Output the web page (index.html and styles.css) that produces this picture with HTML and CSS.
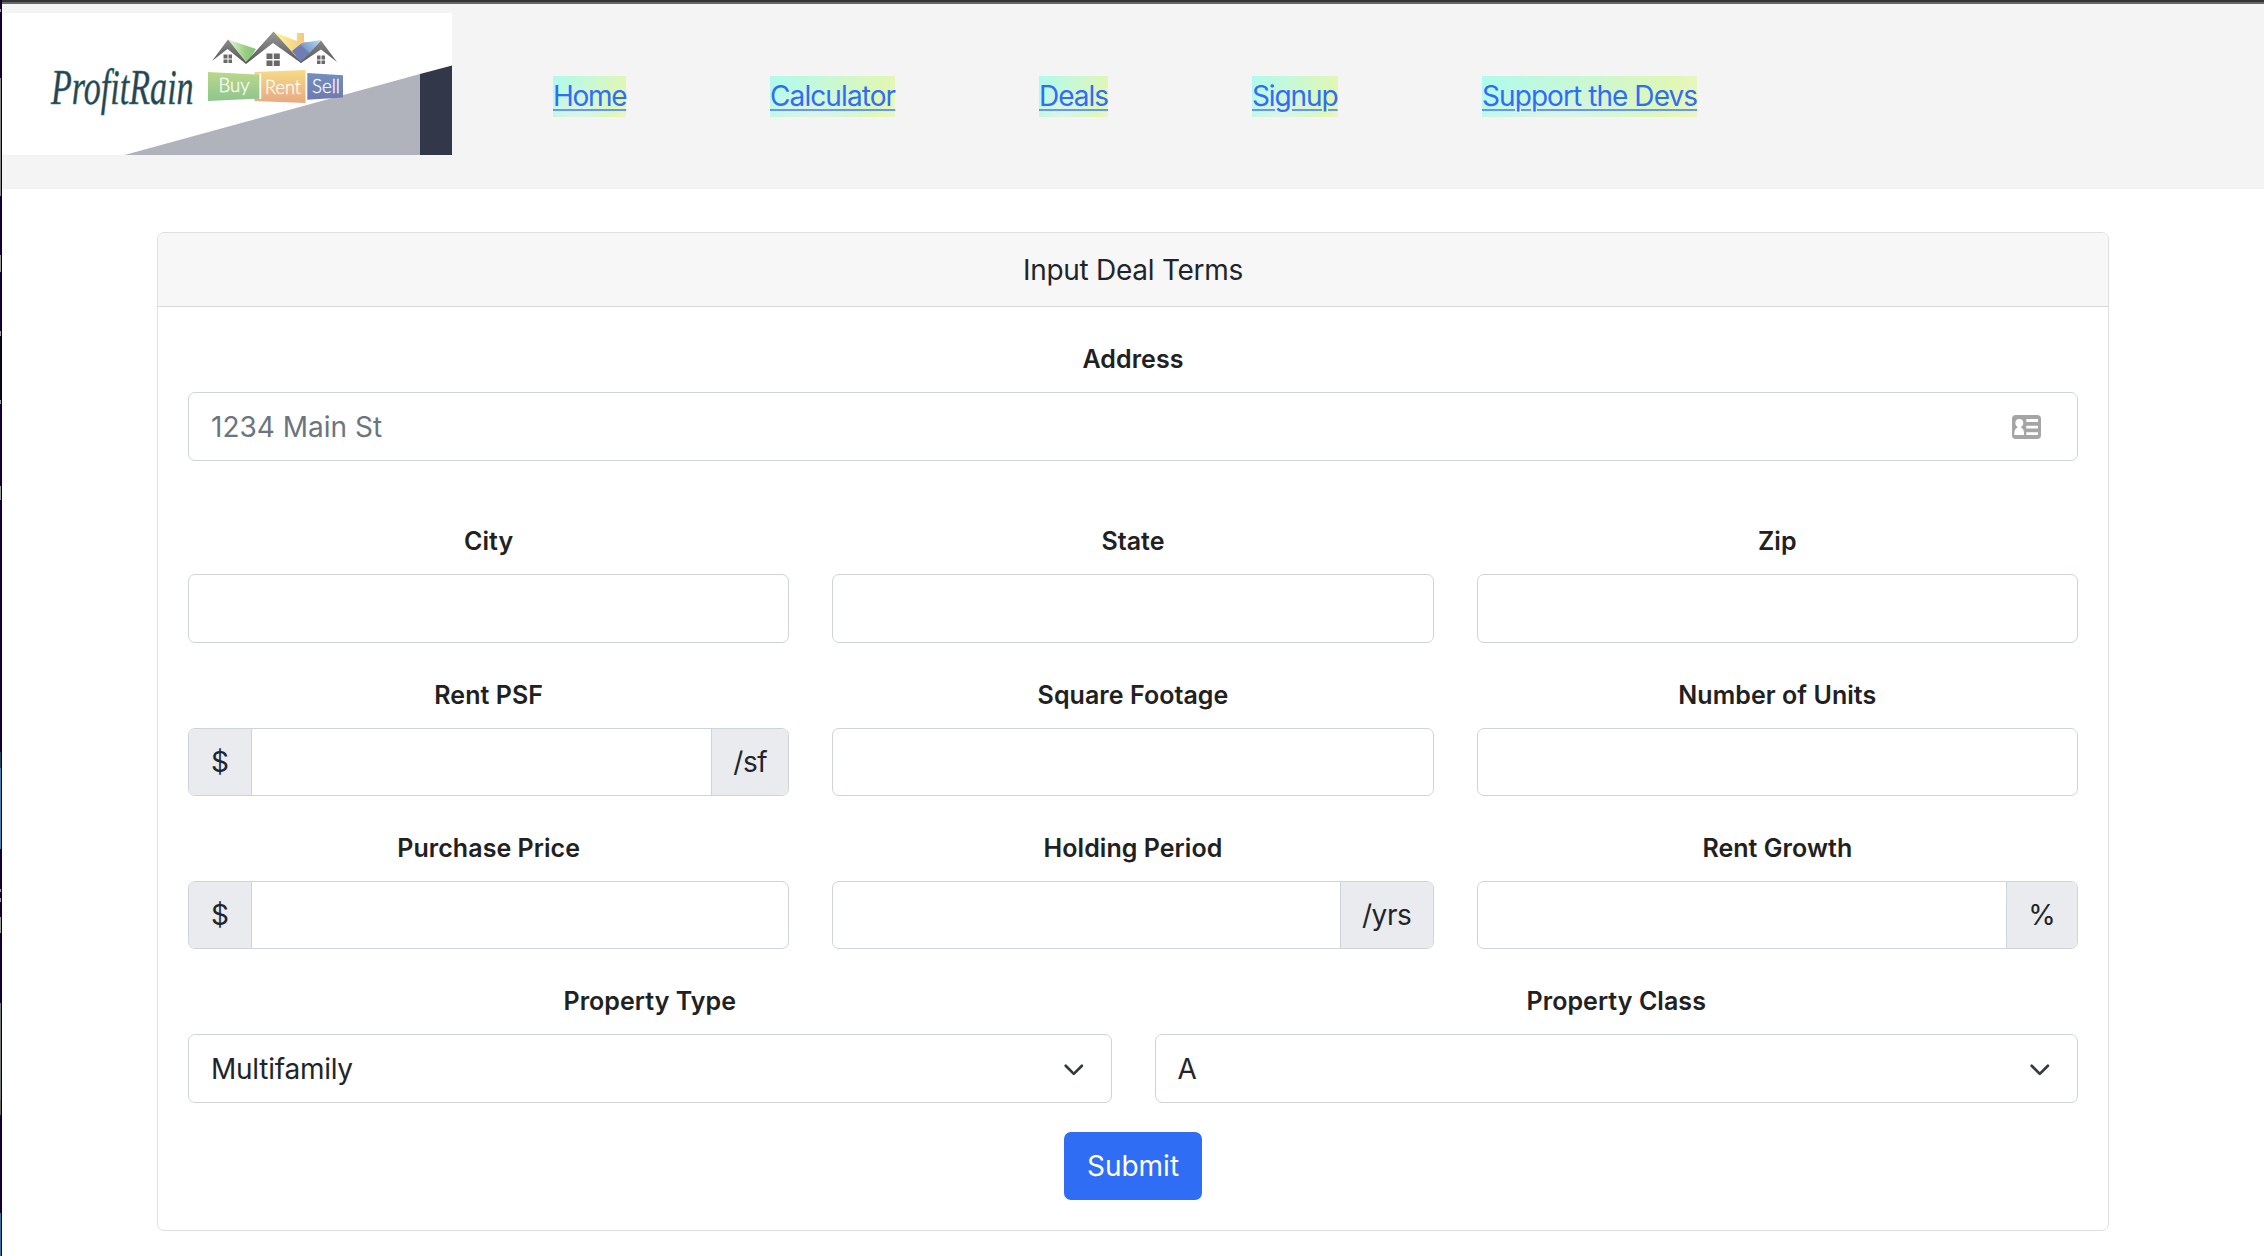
FILE: index.html
```html
<!DOCTYPE html>
<html lang="en">
<head>
<meta charset="utf-8">
<title>ProfitRain</title>
<link rel="stylesheet" href="styles.css">
</head>
<body>
<div class="window-edge"></div>
<div class="page">
<header class="site-header">
  <svg class="logo" viewBox="2 13 450 142" role="img" aria-label="ProfitRain">
    <defs>
      <linearGradient id="roof" x1="0" y1="0" x2="0" y2="1"><stop offset="0" stop-color="#999"/><stop offset="1" stop-color="#555"/></linearGradient>
      <linearGradient id="leaf"><stop offset="0" stop-color="#e6f7dc"/><stop offset=".6" stop-color="#9bd083"/><stop offset="1" stop-color="#83c174"/></linearGradient>
      <linearGradient id="sun"><stop offset="0" stop-color="#fdf7a0"/><stop offset="1" stop-color="#efb36e"/></linearGradient>
      <linearGradient id="sky" x1="1" y1="0" x2="0" y2=".8"><stop offset="0" stop-color="#b5dcf2"/><stop offset=".5" stop-color="#7a9fd0"/><stop offset=".55" stop-color="#6f7db4"/></linearGradient>
      <linearGradient id="buy" x1="0" y1="0" x2="0" y2="1"><stop offset="0" stop-color="#bad88a"/><stop offset="1" stop-color="#8ec58e"/></linearGradient>
      <linearGradient id="rent" x1="0" y1="0" x2="0" y2="1"><stop offset="0" stop-color="#f6db84"/><stop offset="1" stop-color="#e8a883"/></linearGradient>
      <linearGradient id="sell" x1="0" y1="0" x2="0" y2="1"><stop offset="0" stop-color="#718fbd"/><stop offset="1" stop-color="#7178b0"/></linearGradient>
    </defs>
    <rect x="2" y="13" width="450" height="142" fill="#fff"/>
    <path d="M124.500 155 420 74v81z" fill="#b0b3bb"/>
    <path d="M420 74 452 65.500V155h-32z" fill="#33374a"/>
    <path d="M228 39.500 256 49 247 63z" fill="url(#leaf)"/>
    <path d="M274 32 297 41V33h7v9l14 1-26 12z" fill="url(#sun)"/>
    <path d="M321 40 302 43 292 51 301 63z" fill="url(#sky)"/>
    <path d="M228 39.500 212 61 227.500 49 246 64 273 43 301 63 321 49.500 337 62 321 40.500 301 62 273.500 31.500 246 62z" fill="url(#roof)"/>
    <g fill="#6b6968">
      <path d="M223.500 54.500h4v4h-4zM228.500 54.500h3.500v4h-3.500zM223.500 59.500h4v3.500h-4zM228.500 59.500h3.500v3.500h-3.500z"/>
      <path d="M266.500 53.500h6v5.500h-6zM273.800 53.500h6v5.500h-6zM266.500 60.500h6v5.500h-6zM273.800 60.500h6v5.500h-6z"/>
      <path d="M317 55.500h3.500v4H317zM321.500 55.500h3.500v4h-3.500zM317 60.500h3.500v3.500H317zM321.500 60.500h3.500v3.500h-3.500z"/>
    </g>
    <path d="M254.500 72 305.500 70V103L254.500 101z" fill="url(#rent)"/>
    <path d="M208 72 260 74.700V98.500L208 101z" fill="url(#buy)"/>
    <path d="M260.300 73.500V99" stroke="#fff" stroke-width="1.800"/>
    <path d="M307.300 73 343 75.300V97.500L307.300 99.700z" fill="url(#sell)"/>
    <g class="logo-tags">
      <text x="218.500" y="92" textLength="31" lengthAdjust="spacingAndGlyphs">Buy</text>
      <text x="265" y="94" textLength="36" lengthAdjust="spacingAndGlyphs">Rent</text>
      <text x="312" y="92.500" textLength="28" lengthAdjust="spacingAndGlyphs">Sell</text>
    </g>
    <text class="logo-name" transform="translate(51 104) scale(.682 1)">ProfitRain</text>
  </svg>
  <nav class="nav">
    <a class="nav-link home" href="#">Home</a>
    <a class="nav-link calculator" href="#">Calculator</a>
    <a class="nav-link deals" href="#">Deals</a>
    <a class="nav-link signup" href="#">Signup</a>
    <a class="nav-link support" href="#">Support the Devs</a>
  </nav>
</header>
<main class="card">
  <div class="card-header">Input Deal Terms</div>
  <form class="card-body">
    <div class="field address">
      <label for="address">Address</label>
      <div class="group"><input id="address" placeholder="1234 Main St">
        <svg class="contact" viewBox="0 0 29 24"><rect width="29" height="24" rx="4" fill="#a5a5a5"/><g fill="#fff"><circle cx="7.300" cy="8" r="3.900"/><path d="M5.500 11h3.600v1.500c2 .8 3 3 3 7.500H2.200c0-4.500 1.200-6.700 3.300-7.500zM14.300 4H26v3H14.300zM14.300 10.700H26v2.800H14.300zM14.300 17.200H26V20H14.300z"/></g></svg>
      </div>
    </div>
    <div class="row">
      <div class="field"><label for="city">City</label><div class="group"><input id="city"></div></div>
      <div class="field"><label for="state">State</label><div class="group"><input id="state"></div></div>
      <div class="field"><label for="zip">Zip</label><div class="group"><input id="zip"></div></div>
    </div>
    <div class="row compact">
      <div class="field"><label for="psf">Rent PSF</label><div class="group"><span class="addon dollar">$</span><input id="psf"><span class="addon sf">/sf</span></div></div>
      <div class="field"><label for="sqft">Square Footage</label><div class="group"><input id="sqft"></div></div>
      <div class="field"><label for="units">Number of Units</label><div class="group"><input id="units"></div></div>
    </div>
    <div class="row compact">
      <div class="field"><label for="price">Purchase Price</label><div class="group"><span class="addon dollar">$</span><input id="price"></div></div>
      <div class="field"><label for="period">Holding Period</label><div class="group"><input id="period"><span class="addon yrs">/yrs</span></div></div>
      <div class="field"><label for="growth">Rent Growth</label><div class="group"><input id="growth"><span class="addon percent">%</span></div></div>
    </div>
    <div class="row">
      <div class="field"><label for="type">Property Type</label><div class="group"><select id="type"><option>Multifamily</option></select>
        <svg class="chevron" viewBox="0 0 16 16"><path d="m2 5 6 6 6-6"/></svg></div></div>
      <div class="field"><label for="class">Property Class</label><div class="group"><select id="class"><option>A</option></select>
        <svg class="chevron" viewBox="0 0 16 16"><path d="m2 5 6 6 6-6"/></svg></div></div>
    </div>
    <button class="submit" type="button">Submit</button>
  </form>
</main>
</div>
</body>
</html>
```
FILE: styles.css
```css
* { box-sizing: border-box; }
body {
  margin: 0;
  height: 1256px;
  overflow: hidden;
  display: flex;
  background: #fff;
  color: #212529;
  font: 28px/43px Inter, "Liberation Sans", sans-serif;
}
.window-edge {
  width: 2px;
  flex: none;
  border-right: 1px solid #000;
  background: linear-gradient(#170033 0 9px, #999 9px 12px, #170033 12px 78px, #888 78px 196px, #170033 196px 255px, #999 255px 272px, #170033 272px 331px, #999 331px 336px, #0a0a18 336px 400px, #999 400px 404px, #170033 404px 486px, #999 486px 500px, #170033 500px 752px, #246 752px 768px, #4786b4 768px 849px, #170033 849px 889px, #999 889px 892px, #170033 892px 898px, #999 898px 902px, #170033 902px 917px, #999 917px 933px, #170033 933px 1003px, #777b80 1003px 1099px, #6b655c 1101px 1114px, #170033 1116px 1213px, #3875a5 1213px);
}
.page { flex: 1; border-top: 2px solid #333; }
.site-header {
  height: 187px;
  border-top: 2px solid #666;
  padding-top: 9px;
  display: flex;
  align-items: flex-start;
  background: #f4f4f4;
}
.logo { width: 450px; height: 142px; flex: none; }
.logo-name {
  font: italic 50px "Liberation Serif", serif;
  fill: #2b4252;
  stroke: #377f78;
  stroke-width: .5px;
}
.logo-tags { font: 300 20px Lato, sans-serif; fill: #fff; stroke: #fff; stroke-width: .3px; }
.nav { display: flex; gap: 144px; margin: 63px 0 0 101px; }
.nav-link {
  height: 41px;
  line-height: 41px;
  white-space: nowrap;
  color: #306df5;
  text-decoration: underline 2px #6696f7;
  text-underline-offset: 3px;
  background: radial-gradient(ellipse at 35% 100%, #def4e5 0, transparent 55%), linear-gradient(110deg, #affbee, #c9f8d4 45%, #e0f7b5 85%, #eef5c4);
}
.home { width: 73px; letter-spacing: -1.3px; }
.calculator { width: 125px; letter-spacing: -.9px; }
.deals { width: 69px; letter-spacing: -1px; }
.signup { width: 86px; letter-spacing: -1.1px; }
.support { width: 215px; letter-spacing: -.93px; }
.card {
  width: 1952px;
  height: 999px;
  margin: 43px 0 0 155px;
  border: 1px solid #dfdfdf;
  border-radius: 7px;
  overflow: hidden;
}
.card-header {
  height: 74px;
  line-height: 74px;
  text-align: center;
  background: #f7f7f7;
  border-bottom: 1px solid #d9d9d9;
  letter-spacing: -.27px;
}
.card-body { padding: 33px 30px 0; display: flex; flex-direction: column; gap: 33px; }
.row { display: flex; gap: 43px; }
.field { flex: 1; min-width: 0; }
.address { flex: none; margin-bottom: 28px; }
.field label {
  display: block;
  height: 38px;
  margin-bottom: 14px;
  line-height: 38px;
  color: #212121;
  font-size: 25px;
  font-weight: 600;
  letter-spacing: .05px;
  text-align: center;
}
.group {
  height: 69px;
  display: flex;
  align-items: center;
  border: 1px solid #ced4da;
  border-radius: 7px;
  overflow: hidden;
}
.compact .group { height: 68px; }
.group input, .group select {
  flex: 1;
  min-width: 0;
  height: 100%;
  padding: 0 22px;
  border: 0;
  outline: 0;
  appearance: none;
  background: transparent;
  color: inherit;
  font: inherit;
  letter-spacing: 0;
}
.group select { padding-top: 2px; letter-spacing: -.25px; }
.group input::placeholder { color: #6c757d; opacity: 1; }
.addon {
  height: 100%;
  line-height: 67px;
  flex: none;
  text-align: center;
  background: #e9ebef;
  border-left: 1px solid #ced4da;
}
.dollar { width: 63px; border-left: 0; border-right: 1px solid #ced4da; }
.sf { width: 77px; letter-spacing: -.4px; }
.yrs { width: 93px; letter-spacing: -.4px; }
.percent { width: 71px; }
.contact { width: 29px; height: 24px; margin-right: 36px; }
.chevron { width: 21.600px; height: 21.600px; margin: 2px 26px 0 0; }
.chevron path { fill: none; stroke: #343a40; stroke-width: 2; stroke-linecap: round; stroke-linejoin: round; }
.submit {
  align-self: center;
  width: 138px;
  height: 68px;
  margin-top: -4px;
  padding: 0;
  border: 0;
  border-radius: 7px;
  background: #306df5;
  color: #fff;
  font: inherit;
}
```
